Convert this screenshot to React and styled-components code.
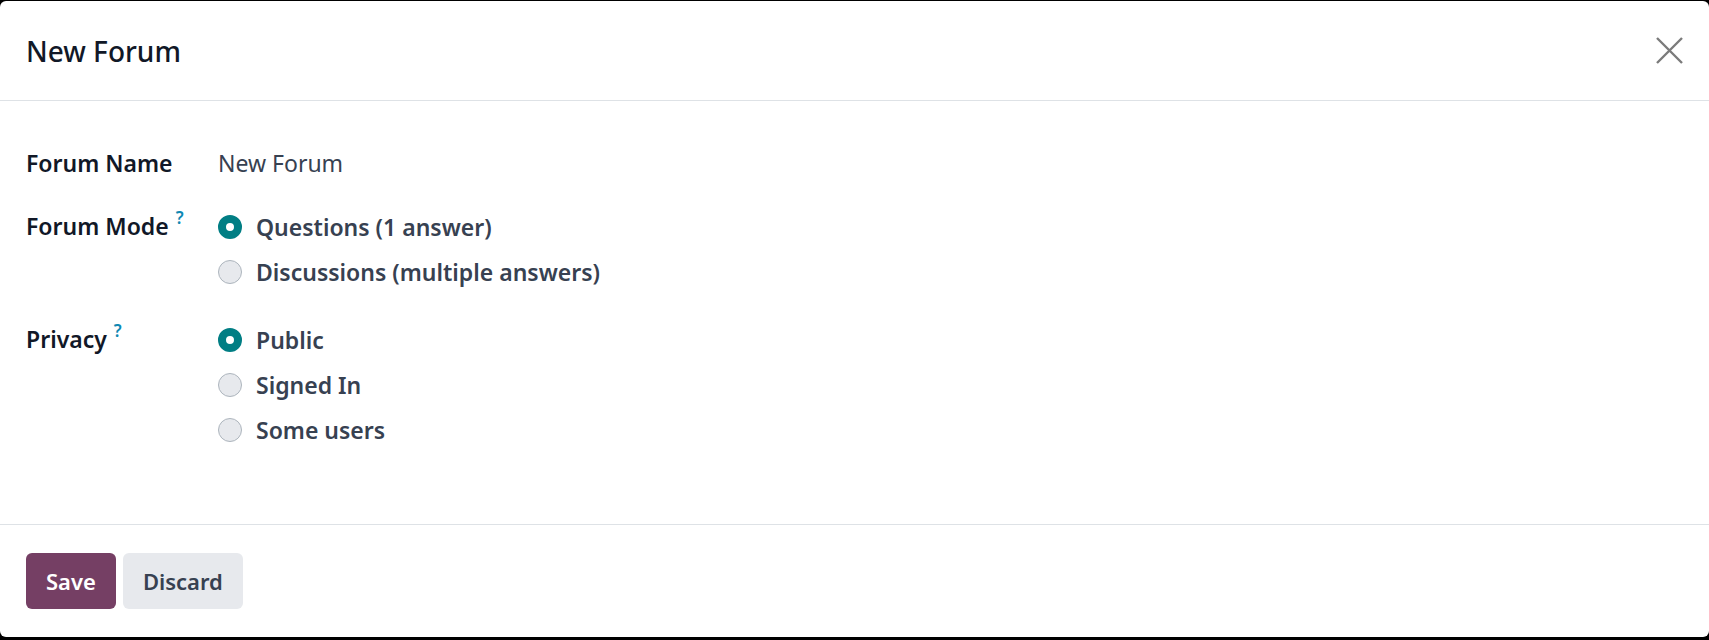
import React, { useState } from "react";
import styled, { createGlobalStyle } from "styled-components";

const Global = createGlobalStyle`
  html, body { margin: 0; padding: 0; background: #000; }
  body { font-family: "Noto Sans", "Open Sans", sans-serif; overflow: hidden; }
  * { box-sizing: border-box; }
`;

const Backdrop = styled.div`
  width: 1709px;
  height: 640px;
  padding-top: 1px;
  background: #000;
`;

const Dialog = styled.div`
  display: flex;
  flex-direction: column;
  height: 636px;
  background: #fff;
  border-radius: 6px;
  overflow: hidden;
`;

const Header = styled.header`
  display: flex;
  align-items: center;
  justify-content: space-between;
  height: 100px;
  padding: 0 26px;
  border-bottom: 1px solid #dee2e6;
`;

const Title = styled.h4`
  margin: 0;
  font-size: 28px;
  font-weight: 500;
  color: #111827;
  line-height: 1;
`;

const CloseButton = styled.button`
  display: flex;
  align-items: center;
  justify-content: center;
  width: 28px;
  height: 28px;
  padding: 0;
  border: 0;
  background: transparent;
  cursor: pointer;
  color: #7b7b7b;
`;

const Body = styled.main`
  flex: 1;
  padding: 40px 26px 0;
`;

const FieldRow = styled.div`
  display: grid;
  grid-template-columns: 192px 1fr;
  margin-bottom: ${(p) => p.$gap || 0}px;
`;

const Label = styled.label`
  font-size: 23px;
  font-weight: 600;
  line-height: 45px;
  color: #111827;
`;

const Help = styled.sup`
  font-size: 17px;
  font-weight: 600;
  color: #0f88b3;
  margin-left: 7px;
  vertical-align: 11px;
  line-height: 0;
`;

const Value = styled.span`
  font-size: 23px;
  font-weight: 400;
  line-height: 45px;
  color: #374151;
`;

const RadioList = styled.div`
  display: flex;
  flex-direction: column;
`;

const Option = styled.label`
  display: flex;
  align-items: center;
  gap: 14px;
  height: 45px;
  font-size: 23px;
  font-weight: 600;
  color: #374151;
  cursor: pointer;
`;

const RadioDot = styled.span`
  flex: none;
  width: 24px;
  height: 24px;
  border-radius: 50%;
  background: ${(p) => (p.$checked ? "#fff" : "#e7e9ed")};
  border: ${(p) => (p.$checked ? "8px solid #017e84" : "1px solid #adb5bd")};
`;

const Footer = styled.footer`
  display: flex;
  gap: 7px;
  padding: 28px 26px 0;
  height: 113px;
  border-top: 1px solid #dee2e6;
`;

const Button = styled.button`
  height: 56px;
  padding: 0 20px;
  border: 0;
  border-radius: 6px;
  font-family: inherit;
  font-size: 22px;
  font-weight: 600;
  cursor: pointer;
  background: ${(p) => (p.$primary ? "#753f64" : "#e7e9ed")};
  color: ${(p) => (p.$primary ? "#fff" : "#374151")};
`;

function RadioGroup({ options, value, onChange }) {
  return (
    <RadioList>
      {options.map((o) => (
        <Option key={o} onClick={() => onChange(o)}>
          <RadioDot $checked={value === o} />
          {o}
        </Option>
      ))}
    </RadioList>
  );
}

export default function App() {
  const [mode, setMode] = useState("Questions (1 answer)");
  const [privacy, setPrivacy] = useState("Public");
  return (
    <>
      <Global />
      <Backdrop>
        <Dialog>
          <Header>
            <Title>New Forum</Title>
            <CloseButton aria-label="Close">
              <svg width="27" height="27" viewBox="0 0 27 27" fill="none" stroke="currentColor" strokeWidth="2.4">
                <path d="M1 1L26 26M26 1L1 26" />
              </svg>
            </CloseButton>
          </Header>
          <Body>
            <FieldRow $gap={18}>
              <Label>Forum Name</Label>
              <Value>New Forum</Value>
            </FieldRow>
            <FieldRow $gap={23}>
              <Label>
                Forum Mode<Help>?</Help>
              </Label>
              <RadioGroup
                options={["Questions (1 answer)", "Discussions (multiple answers)"]}
                value={mode}
                onChange={setMode}
              />
            </FieldRow>
            <FieldRow>
              <Label>
                Privacy<Help>?</Help>
              </Label>
              <RadioGroup
                options={["Public", "Signed In", "Some users"]}
                value={privacy}
                onChange={setPrivacy}
              />
            </FieldRow>
          </Body>
          <Footer>
            <Button $primary>Save</Button>
            <Button>Discard</Button>
          </Footer>
        </Dialog>
      </Backdrop>
    </>
  );
}
